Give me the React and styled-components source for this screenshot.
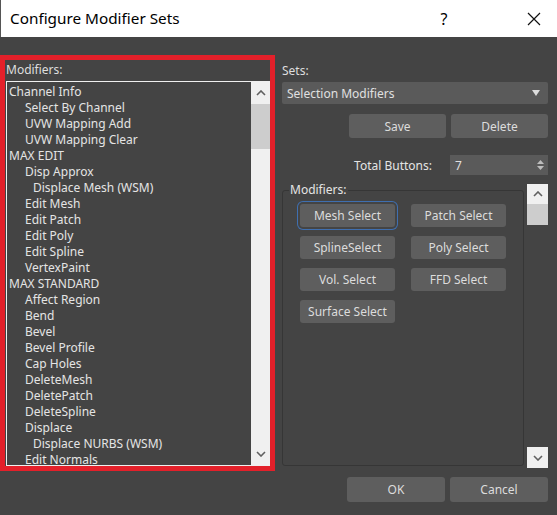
import styled, { createGlobalStyle } from "styled-components";

const Global = createGlobalStyle`
  html, body {
    margin: 0;
    padding: 0;
    background: #444444;
  }
  * {
    box-sizing: border-box;
  }
`

const Window = styled.div`
  width: 557px;
  height: 515px;
  display: flex;
  flex-direction: column;
  background: #444444;
  font-family: "Noto Sans", "Open Sans", sans-serif;
  font-size: 12px;
  color: #dedede;
  overflow: hidden;
`

const TitleBar = styled.div`
  height: 37px;
  flex: none;
  background: #ffffff;
  border-left: 1px solid #555;
  display: flex;
  align-items: center;
  padding-left: 9px;
`

const Title = styled.div`
  flex: 1;
  color: #000;
  font-size: 15.3px;
  padding-bottom: 2px;
`

const TitleButton = styled.div`
  width: 46px;
  height: 37px;
  display: flex;
  align-items: center;
  justify-content: center;
  color: #000;
  font-size: 16px;
  margin-right: ${(p) => p.$mr || 0}px;
`

const Body = styled.div`
  flex: 1;
  display: flex;
  gap: 7px;
`

const LeftFrame = styled.div`
  margin-top: 18px;
  width: 275px;
  height: 416px;
  border: 5px solid #e3202a;
  padding-left: 1px;
  display: flex;
  flex-direction: column;
`

const Label = styled.div`
  height: ${(p) => p.$h || 21}px;
  display: flex;
  align-items: center;
  padding-bottom: 2px;
  flex: none;
`

const ListBox = styled.div`
  flex: 1;
  border: 1px solid #f0f0f0;
  border-right: none;
  display: flex;
  overflow: hidden;
`

const Items = styled.div`
  flex: 1;
  padding-top: 2px;
  padding-left: 2px;
`

const Item = styled.div`
  height: 16px;
  line-height: 16px;
  white-space: nowrap;
  padding-left: ${(p) => p.$level * 8 + (p.$level > 0 ? 8 : 0)}px;
  color: #e4e4e4;
`

const ScrollBar = styled.div`
  width: ${(p) => p.$w}px;
  flex: none;
  display: flex;
  flex-direction: column;
  background: ${(p) => (p.$track ? "#f0f0f0" : "transparent")};
`

const ArrowBtn = styled.div`
  height: ${(p) => p.$h}px;
  display: flex;
  align-items: center;
  justify-content: center;
  background: #f0f0f0;
  flex: none;
`

const Thumb = styled.div`
  height: ${(p) => p.$h}px;
  background: #cdcdcd;
  flex: none;
`

const Spacer = styled.div`
  flex: 1;
`

const Right = styled.div`
  margin-top: 23px;
  width: 266px;
  display: flex;
  flex-direction: column;
`

const Dropdown = styled.div`
  height: 22px;
  background: #5a5a5a;
  border-radius: 2px;
  display: flex;
  align-items: center;
  justify-content: space-between;
  padding: 0 8px 0 5px;
  color: #e0e0e0;
`

const ButtonRow = styled.div`
  display: flex;
  justify-content: flex-end;
  gap: 5px;
  margin-top: ${(p) => p.$mt}px;
`

const Button = styled.div`
  width: ${(p) => p.$w || 97}px;
  height: ${(p) => p.$h || 24}px;
  background: #5e5e5e;
  border-radius: 3px;
  display: flex;
  align-items: center;
  justify-content: center;
  color: #dcdcdc;
  white-space: nowrap;
  box-shadow: ${(p) => (p.$focus ? "0 0 0 2px #444, 0 0 0 3px #3f6fb0" : "none")};
`

const SpinRow = styled.div`
  margin-top: 17px;
  height: 20px;
  display: flex;
  align-items: center;
  justify-content: flex-end;
`

const SpinLabel = styled.div`
  margin-right: 18px;
  color: #e4e4e4;
`

const Spinner = styled.div`
  width: 98px;
  height: 20px;
  background: #5a5a5a;
  display: flex;
  align-items: center;
  justify-content: space-between;
  padding: 0 4px 0 5px;
  color: #e0e0e0;
`

const GroupRow = styled.div`
  margin-top: 9px;
  height: 284px;
  display: flex;
  gap: 3px;
`

const Group = styled.fieldset`
  margin: 0;
  width: 242px;
  height: 282px;
  border: 1px solid #363636;
  border-radius: 3px;
  padding: 8px 0 0 17px;
  display: grid;
  grid-template-columns: 95px 95px;
  grid-auto-rows: 23px;
  column-gap: 16px;
  row-gap: 9px;
  align-content: start;
`

const Legend = styled.legend`
  padding: 0 1px;
  margin-left: -11px;
  color: #e4e4e4;
  line-height: 12px;
`

const FooterRow = styled(ButtonRow)`
  margin-top: 9px;
`

const Chevron = ({ up }) => (
  <svg width="10" height="6" viewBox="0 0 10 6">
    <polyline
      points={up ? "1,5 5,1 9,5" : "1,1 5,5 9,1"}
      fill="none"
      stroke="#606060"
      strokeWidth="1.6"
    />
  </svg>
);

const items = [
  ["Channel Info", 0],
  ["Select By Channel", 1],
  ["UVW Mapping Add", 1],
  ["UVW Mapping Clear", 1],
  ["MAX EDIT", 0],
  ["Disp Approx", 1],
  ["Displace Mesh (WSM)", 2],
  ["Edit Mesh", 1],
  ["Edit Patch", 1],
  ["Edit Poly", 1],
  ["Edit Spline", 1],
  ["VertexPaint", 1],
  ["MAX STANDARD", 0],
  ["Affect Region", 1],
  ["Bend", 1],
  ["Bevel", 1],
  ["Bevel Profile", 1],
  ["Cap Holes", 1],
  ["DeleteMesh", 1],
  ["DeletePatch", 1],
  ["DeleteSpline", 1],
  ["Displace", 1],
  ["Displace NURBS (WSM)", 2],
  ["Edit Normals", 1],
];

const mods = [
  "Mesh Select",
  "Patch Select",
  "SplineSelect",
  "Poly Select",
  "Vol. Select",
  "FFD Select",
  "Surface Select",
];

const App = () => {
  return (
    <>
      <Global />
      <Window>
        <TitleBar>
          <Title>Configure Modifier Sets</Title>
          <TitleButton $mr={44}>?</TitleButton>
          <TitleButton>
            <svg width="14" height="14" viewBox="0 0 14 14">
              <path d="M1 1 L13 13 M13 1 L1 13" stroke="#111" strokeWidth="1.2" />
            </svg>
          </TitleButton>
        </TitleBar>
        <Body>
          <LeftFrame>
            <Label>Modifiers:</Label>
            <ListBox>
              <Items>
                {items.map(([name, level]) => (
                  <Item key={name} $level={level}>
                    {name}
                  </Item>
                ))}
              </Items>
              <ScrollBar $w={19} $track>
                <ArrowBtn $h={22}>
                  <Chevron up />
                </ArrowBtn>
                <Thumb $h={45} />
                <Spacer />
                <ArrowBtn $h={22}>
                  <Chevron />
                </ArrowBtn>
              </ScrollBar>
            </ListBox>
          </LeftFrame>
          <Right>
            <Label $h={22}>Sets:</Label>
            <Dropdown>
              <span>Selection Modifiers</span>
              <svg width="8" height="6" viewBox="0 0 8 6">
                <polygon points="0,0 8,0 4,6" fill="#dcdcdc" />
              </svg>
            </Dropdown>
            <ButtonRow $mt={10}>
              <Button>Save</Button>
              <Button>Delete</Button>
            </ButtonRow>
            <SpinRow>
              <SpinLabel>Total Buttons:</SpinLabel>
              <Spinner>
                <span>7</span>
                <svg width="7" height="12" viewBox="0 0 7 12">
                  <polygon points="0,5 7,5 3.5,1" fill="#bdbdbd" />
                  <polygon points="0,7 7,7 3.5,11" fill="#bdbdbd" />
                </svg>
              </Spinner>
            </SpinRow>
            <GroupRow>
              <Group>
                <Legend>Modifiers:</Legend>
                {mods.map((m, i) => (
                  <Button key={m} $w={95} $h={23} $focus={i === 0}>
                    {m}
                  </Button>
                ))}
              </Group>
              <ScrollBar $w={21}>
                <ArrowBtn $h={20}>
                  <Chevron up />
                </ArrowBtn>
                <Thumb $h={21} />
                <Spacer />
                <ArrowBtn $h={21}>
                  <Chevron />
                </ArrowBtn>
              </ScrollBar>
            </GroupRow>
            <FooterRow>
              <Button $w={98} $h={25}>OK</Button>
              <Button $w={98} $h={25}>Cancel</Button>
            </FooterRow>
          </Right>
        </Body>
      </Window>
    </>
  );
};

export default App;
